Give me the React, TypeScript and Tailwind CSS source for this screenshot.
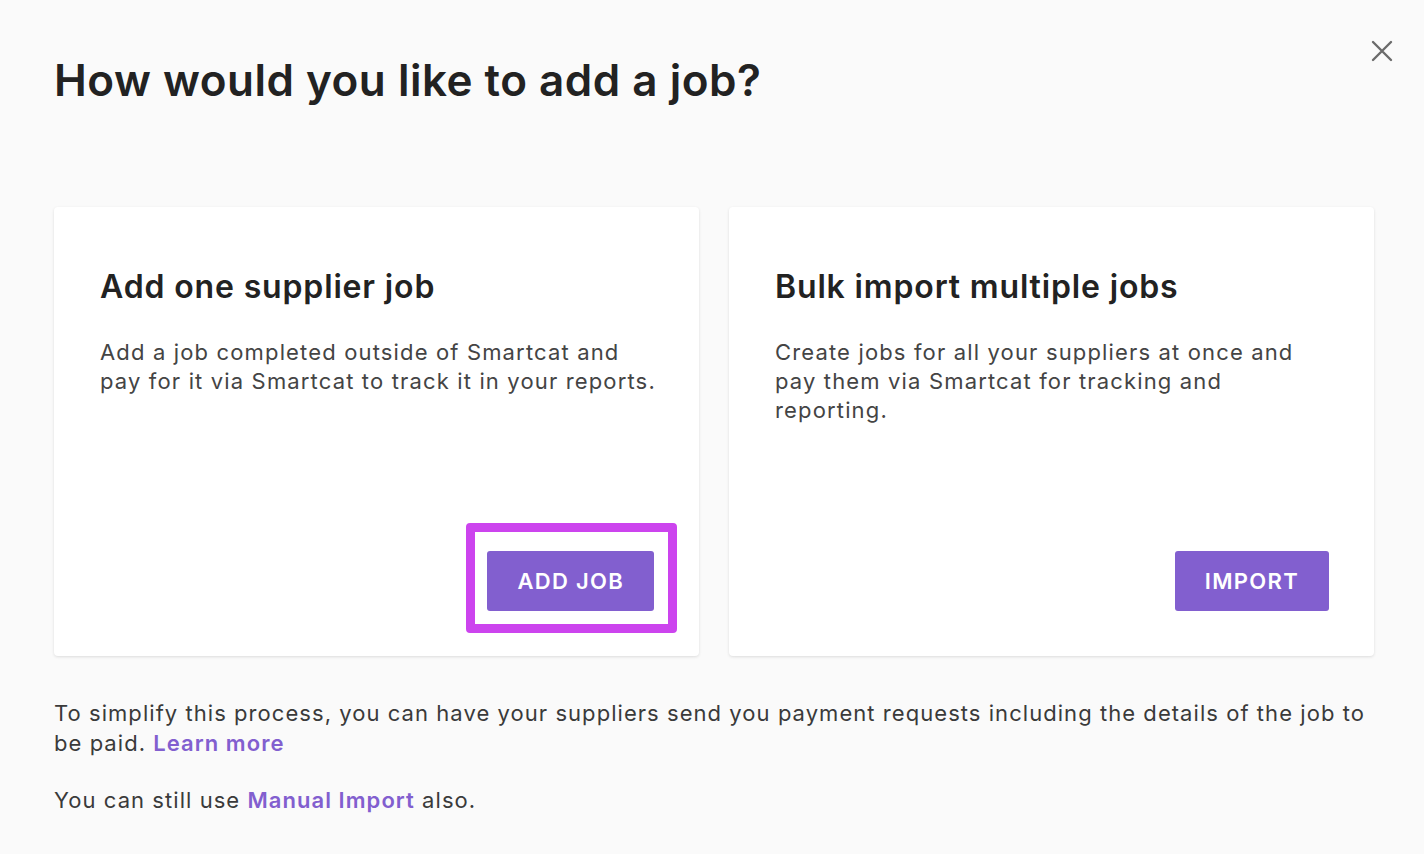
import React from "react";

export default function App() {
  return (
    <div
      className="relative w-[1424px] h-[854px] bg-[#fafafa] overflow-hidden"
      style={{ fontFamily: "Inter, 'Noto Sans', sans-serif" }}
    >
      <button className="absolute left-[1370px] top-[39px] w-6 h-6 flex items-center justify-center">
        <svg width="24" height="24" viewBox="0 0 24 24" fill="none" stroke="#6b6b6b" strokeWidth="2.4" strokeLinecap="round">
          <path d="M3 3L21 21M21 3L3 21" />
        </svg>
      </button>
      <div className="flex flex-col px-[54px] pt-[52px]">
        <h1 className="text-[44px] leading-[56px] font-semibold text-[#222222] tracking-[0.5px]">
          How would you like to add a job?
        </h1>
        <div className="mt-[99px] grid grid-cols-2 gap-[30px] w-[1320px]">
          <Card
            title="Add one supplier job"
            text="Add a job completed outside of Smartcat and pay for it via Smartcat to track it in your reports."
            button="ADD JOB"
            highlight
          />
          <Card
            title="Bulk import multiple jobs"
            text="Create jobs for all your suppliers at once and pay them via Smartcat for tracking and reporting."
            button="IMPORT"
          />
        </div>
        <p className="mt-[42px] mr-[-12px] text-[22px] leading-[30px] text-[#3a3a3a] tracking-[1.05px]">
          To simplify this process, you can have your suppliers send you payment requests including the details of the job to be paid.{" "}
          <span className="text-[#825fcf] font-semibold">Learn more</span>
        </p>
        <p className="mt-[27px] text-[22px] leading-[30px] text-[#3a3a3a] tracking-[1.05px]">
          You can still use <span className="text-[#825fcf] font-semibold">Manual Import</span> also.
        </p>
      </div>
    </div>
  );
}

function Card({
  title,
  text,
  button,
  highlight,
}: {
  title: string;
  text: string;
  button: string;
  highlight?: boolean;
}) {
  return (
    <div className="h-[449px] bg-white rounded-[4px] shadow-[0_1px_3px_rgba(0,0,0,0.12)] pl-[46px] pr-[45px] pt-[62px] pb-[45px] flex flex-col">
      <h2 className="text-[32px] leading-[36px] font-semibold text-[#222222] tracking-[0.85px]">{title}</h2>
      <p className="mt-[33px] mr-[-8px] text-[22px] leading-[29px] text-[#444444] tracking-[1.15px]">{text}</p>
      <div className="mt-auto flex justify-end">
        <div className="relative">
          {highlight && (
            <div className="absolute -left-[21px] -top-[28px] -right-[23px] -bottom-[22px] border-[9px] border-[#cc44ee] rounded-[4px] pointer-events-none" />
          )}
          <button className="h-[60px] px-[30px] bg-[#825fcf] rounded-[3px] text-white text-[22px] font-semibold tracking-[1.3px]">
            {button}
          </button>
        </div>
      </div>
    </div>
  );
}
